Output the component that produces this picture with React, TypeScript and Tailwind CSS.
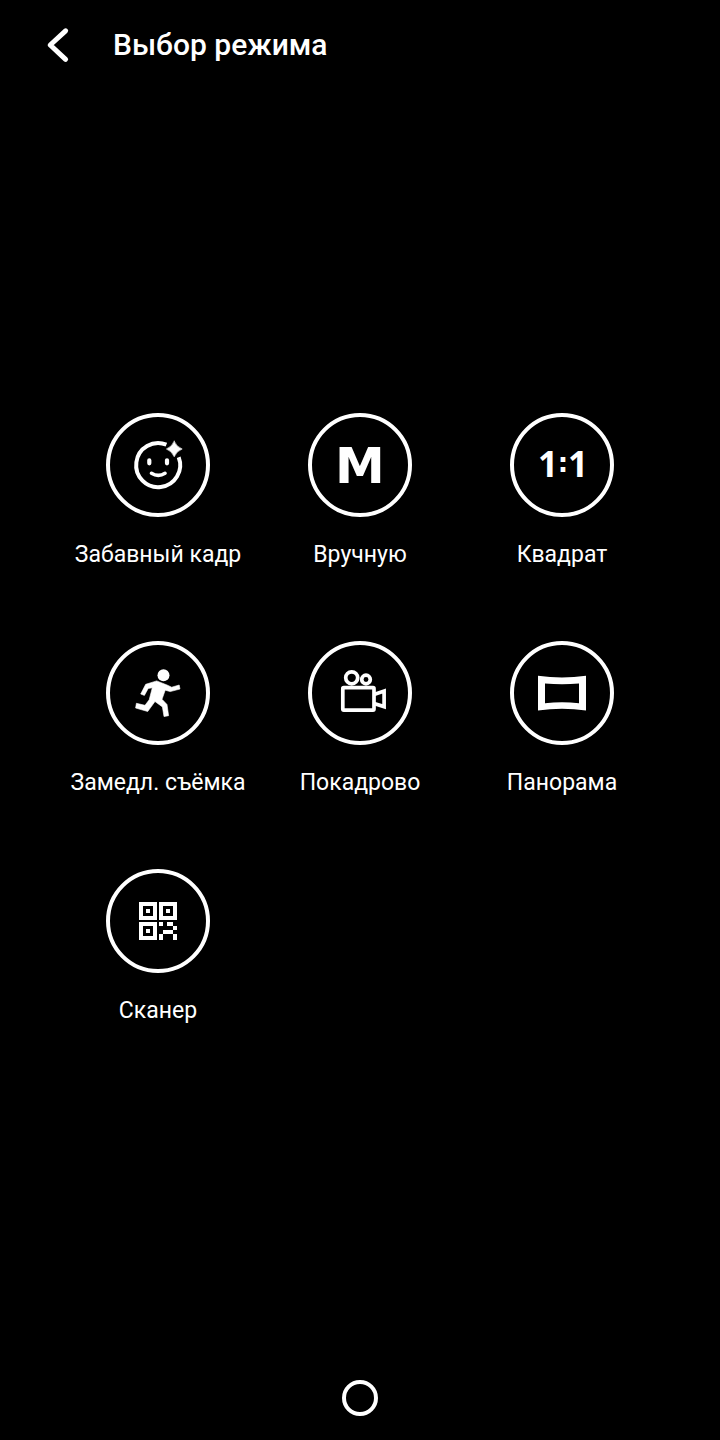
import type { ReactNode } from "react";

type TMode = {
  title: string
  icon: ReactNode
}

function SmileIcon() {
  return (
    <svg className="size-14" viewBox="0 0 56 56" fill="none" stroke="currentColor" strokeLinecap="round">
      <path d="M36.4 7.7A22 22 0 1 0 48.7 20.2" strokeWidth="4" strokeLinecap="butt" />
      <path d="M19.3 23.3V26.3M37 23.3V26.3" strokeWidth="4.2" />
      <path d="M21.5 36.3Q28.3 40.6 35 36.3" strokeWidth="3.6" />
      <path d="M44.2 4.2Q46.4 9.8 52.2 12Q46.4 14.2 44.2 19.8Q42 14.2 36.4 12Q42 9.8 44.2 4.2Z" fill="currentColor" stroke="currentColor" strokeWidth="0.6" />
    </svg>
  );
}

function ManualIcon() {
  return (
    <svg className="size-14 overflow-visible" viewBox="0 0 56 56" fill="currentColor">
      <text x="28" y="46" textAnchor="middle" className="font-['DejaVu_Sans',sans-serif] text-[50px] font-bold">M</text>
    </svg>
  );
}

function SquareIcon() {
  return (
    <svg className="size-14" viewBox="0 0 56 56" fill="currentColor">
      <text textAnchor="middle" className="font-['Noto_Sans',sans-serif] text-[35px] font-bold">
        <tspan x="14" y="40">1</tspan>
        <tspan x="29" y="35" className="font-['DejaVu_Sans',sans-serif] text-[26px]">:</tspan>
        <tspan x="44" y="40">1</tspan>
      </text>
    </svg>
  );
}

function RunnerIcon() {
  return (
    <svg className="size-14" viewBox="0 0 56 56" fill="currentColor">
      <circle cx="33.5" cy="10.2" r="6" />
      <path
        d="M10.7 29L15.7 19.3L26.7 15.9L37 20L41.7 22.2L49.2 20L50 24L40.2 26.6L35.2 25.2L32 34.3L37 39.5L38.6 50.7L34 51.6L32.4 41.9L25 36.5L17.7 46.5L5.6 43L6.4 38.3L15 40.3L19.2 34.8L22.3 22.8L18.2 23.5L14.4 30.4Z"
        stroke="currentColor"
        strokeWidth="0.6"
      />
    </svg>
  );
}

function CameraIcon() {
  return (
    <svg className="size-14" viewBox="0 0 56 56" fill="none" stroke="currentColor" strokeWidth="3.7">
      <circle cx="19.7" cy="12.8" r="6" />
      <circle cx="34" cy="14.5" r="4.3" />
      <rect x="10.8" y="22.7" width="31.2" height="22.4" rx="1" />
      <path d="M42 29.4L52.1 26V41.6L42 38.4" />
    </svg>
  );
}

function PanoramaIcon() {
  return (
    <svg className="size-14" viewBox="0 0 56 56" fill="currentColor" fillRule="evenodd">
      <path d="M4 10.8Q28 14.2 52 10.8V45.4Q28 42.2 4 45.4ZM11 18.4Q28 20 45 18.4V38.2Q28 36.4 11 38.2Z" />
    </svg>
  );
}

function ScannerIcon() {
  return (
    <svg className="size-14" viewBox="0 0 56 56" fill="currentColor" fillRule="evenodd">
      <path d="M9 9h18v18H9zM13 13v10h10V13zM16 16h4v4h-4z" />
      <path d="M29 9h18v18H29zM33 13v10h10V13zM36 16h4v4h-4z" />
      <path d="M9 29h18v18H9zM13 33v10h10V33zM16 36h4v4h-4z" />
      <path d="M29 29h4v4h-4zM37 29h6v4h-6zM43 33h4v4h-4zM33 37h10v4H33zM29 41h4v6h-4zM43 41h4v6h-4z" />
    </svg>
  );
}

const modes: TMode[] = [
  { title: "Забавный кадр", icon: <SmileIcon /> },
  { title: "Вручную", icon: <ManualIcon /> },
  { title: "Квадрат", icon: <SquareIcon /> },
  { title: "Замедл. съёмка", icon: <RunnerIcon /> },
  { title: "Покадрово", icon: <CameraIcon /> },
  { title: "Панорама", icon: <PanoramaIcon /> },
  { title: "Сканер", icon: <ScannerIcon /> },
];

function ModeButton({ title, icon }: TMode) {
  return (
    <button type="button" className="flex flex-col items-center gap-[22px]">
      <span className="flex size-[104px] items-center justify-center rounded-full border-4 border-white">
        {icon}
      </span>
      <span className="text-[23px] leading-8 whitespace-nowrap">{title}</span>
    </button>
  );
}

function App() {
  return (
    <div className="flex min-h-screen flex-col bg-black font-[Roboto,sans-serif] text-white">
      <header className="flex h-[90px] items-center gap-[41px] px-11">
        <button type="button" aria-label="Назад">
          <svg className="h-10 w-7" viewBox="0 0 28 40" fill="none" stroke="currentColor" strokeWidth="5" strokeLinecap="round" strokeLinejoin="round">
            <path d="M21.6 5.8L6.2 20L21.6 34.4" />
          </svg>
        </button>
        <h1 className="text-3xl font-medium">Выбор режима</h1>
      </header>

      <main className="flex flex-1 flex-col justify-center px-[57px] pb-1.5">
        <div className="grid grid-cols-3 gap-y-[70px]">
          {modes.map((mode) => (
            <ModeButton key={mode.title} title={mode.title} icon={mode.icon} />
          ))}
        </div>
      </main>

      <nav className="flex h-[84px] items-center justify-center">
        <button type="button" aria-label="Домой" className="size-9 rounded-full border-4 border-white" />
      </nav>
    </div>
  );
}

export default App;
